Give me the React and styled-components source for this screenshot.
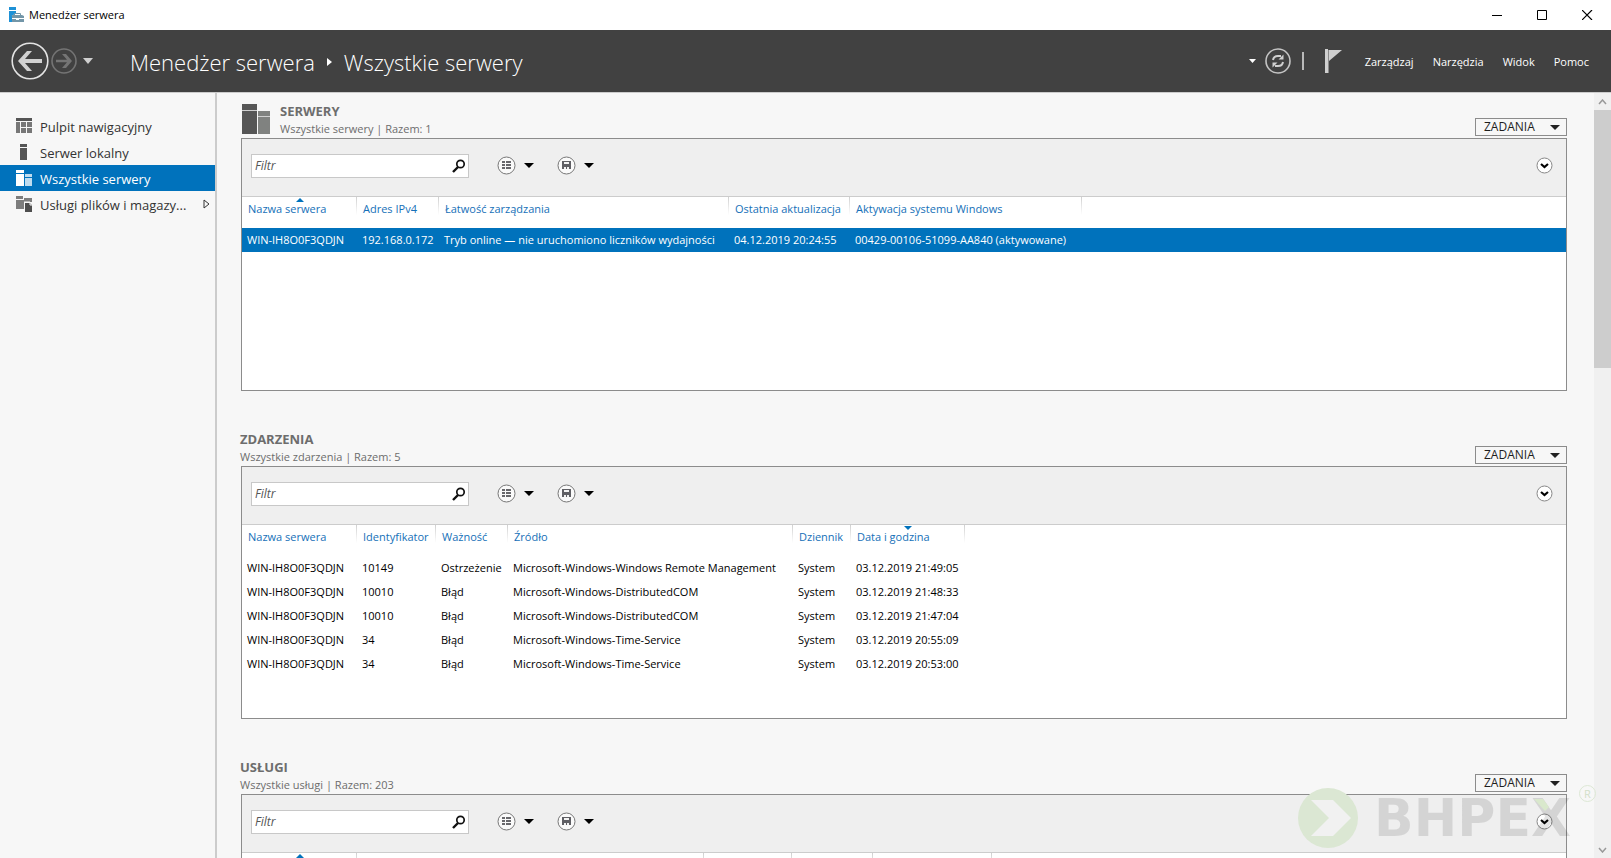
import styled, { createGlobalStyle } from 'styled-components'

const GlobalStyle = createGlobalStyle`
    * {
        box-sizing: border-box;
    }

    body {
        margin: 0;
        background-color: #f7f7f7;
        color: #1e1e1e;
        font-family: 'Open Sans', 'Noto Sans', sans-serif;
        font-size: 11px;
        line-height: 16px;
    }

    button, input {
        font: inherit;
        color: inherit;
    }

    button {
        padding: 0;
        border: 0;
        background: none;
    }

    svg {
        display: block;
        flex: none;
    }
`

const Window = styled.div`
    position: relative;
    display: flex;
    flex-direction: column;
    height: 100vh;
    overflow: hidden;
`

const TitleBar = styled.div`
    display: flex;
    align-items: center;
    flex: none;
    gap: 5px;
    height: 30px;
    padding: 0 1px 0 8px;
    background-color: #fff;
    color: #000;
`

const WindowButtons = styled.div`
    display: flex;
    margin-left: auto;
`

const WindowButton = styled.button`
    display: flex;
    justify-content: center;
    align-items: center;
    width: 45px;
    height: 28px;
`

const Header = styled.header`
    display: flex;
    align-items: center;
    flex: none;
    height: 63px;
    padding: 0 22px 0 11px;
    background-color: #414141;
    border-bottom: 1px solid #cccccc;
    color: #fff;
`

const HeaderButton = styled.button`
    display: flex;
    align-items: center;
    margin-right: ${({ $gap }) => $gap || 0}px;
`

const Breadcrumb = styled.nav`
    display: flex;
    align-items: center;
    gap: 12px;
    padding-top: 2px;
    font-size: 22px;
    font-weight: 300;
    line-height: 30px;
    white-space: nowrap;
`

const HeaderTools = styled.div`
    display: flex;
    align-items: center;
    margin-left: auto;
`

const Separator = styled.span`
    width: 2px;
    height: 18px;
    margin-right: 21px;
    background-color: #b9b9b9;
`

const Menu = styled.div`
    display: flex;
    gap: 19px;
    padding-top: 2px;
`

const Body = styled.div`
    display: flex;
    flex: 1;
    min-height: 0;
`

const Sidebar = styled.nav`
    flex: none;
    width: 217px;
    padding-top: 20px;
    border-right: 2px solid #cccccc;
`

const NavItem = styled.a`
    display: flex;
    align-items: center;
    gap: 8px;
    height: 26px;
    padding: 0 5px 0 16px;
    background-color: ${({ $active }) => $active ? '#0072bc' : 'transparent'};
    color: ${({ $active }) => $active ? '#fff' : '#333'};
    font-size: 13px;
    text-decoration: none;
    white-space: nowrap;
`

const NavLabel = styled.span`
    flex: 1;
    padding-top: 2px;
`

const Content = styled.main`
    flex: 1;
    min-width: 0;
    padding: 8px 27px 0 24px;
    overflow: hidden;
`

const Section = styled.section`
    margin-bottom: 38px;
`

const SectionHeader = styled.div`
    display: flex;
    align-items: flex-end;
    gap: 11px;
    height: 38px;
    margin-bottom: -1px;
`

const SectionIcon = styled.div`
    padding: 0 0 5px 1px;
`

const SectionTitles = styled.div`
    flex: 1;
    padding-bottom: 1px;
    margin-left: -1px;
    color: #6d6d6d;
`

const SectionTitle = styled.h2`
    margin: 0;
    font-size: 13px;
    font-weight: 700;
    line-height: 18px;
`

const SectionSubtitle = styled.p`
    margin: 0;
    font-size: 11px;
    line-height: 18px;
`

const TasksButton = styled.button`
    display: flex;
    align-items: center;
    justify-content: space-between;
    width: 92px;
    height: 18px;
    margin-bottom: 3px;
    padding: 0 6px 0 8px;
    border: 1px solid #8c8c8c;
    font-size: 12px;
`

const Panel = styled.div`
    min-height: 253px;
    border: 1px solid #8c8c8c;
    background-color: #fff;
`

const Toolbar = styled.div`
    display: flex;
    align-items: center;
    height: 58px;
    padding: 0 13px 4px 9px;
    background-color: #efefef;
    border-bottom: 1px solid #cccccc;
`

const FilterBox = styled.label`
    display: flex;
    align-items: center;
    width: 218px;
    height: 24px;
    margin-right: 28px;
    padding: 0 2px 0 3px;
    background-color: #fff;
    border: 1px solid #c8c8c8;
`

const FilterInput = styled.input`
    flex: 1;
    min-width: 0;
    padding: 0;
    border: 0;
    outline: 0;
    font-size: 12px;

    &::placeholder {
        color: #555;
        font-style: italic;
        opacity: 1;
    }
`

const ToolButton = styled.button`
    display: flex;
    align-items: center;
    gap: 8px;
    margin-right: 23px;
`

const ExpandButton = styled.button`
    margin-left: auto;
`

const Table = styled.table`
    width: 100%;
    border-collapse: collapse;
    table-layout: fixed;
    white-space: nowrap;
`

const HeadCell = styled.th`
    position: relative;
    height: 31px;
    padding: 4px 0 0 6px;
    background: linear-gradient(#d0d0d0, #fff) right top / 1px 18px no-repeat;
    color: #1570b8;
    font-weight: 400;
    text-align: left;
    vertical-align: top;
`

const SortMark = styled.svg`
    position: absolute;
    top: 1px;
    left: calc(50% - 4px);
`

const Row = styled.tr`
    background-color: ${({ $selected }) => $selected ? '#0072bc' : '#fff'};
    color: ${({ $selected }) => $selected ? '#fff' : '#000'};
`

const Cell = styled.td`
    height: 24px;
    padding: 0 0 0 5px;
`

const ScrollBar = styled.div`
    display: flex;
    flex-direction: column;
    flex: none;
    width: 17px;
    background-color: #f0f0f0;
`

const ScrollButton = styled.button`
    display: flex;
    justify-content: center;
    align-items: center;
    height: 17px;
`

const ScrollThumb = styled.div`
    height: 258px;
    margin-bottom: auto;
    background-color: #cdcdcd;
`

const Watermark = styled.div`
    position: absolute;
    right: 15px;
    bottom: 10px;
    display: flex;
    align-items: center;
    gap: 8px;
    pointer-events: none;
`

const WatermarkBadge = styled.svg`
    margin-right: 8px;
`

const WatermarkText = styled.span`
    position: relative;
    color: rgba(0, 0, 0, 0.11);
    font-family: 'DejaVu Sans', sans-serif;
    font-size: 52px;
    font-weight: 700;
    line-height: 60px;
`

const WatermarkLeaf = styled.svg`
    position: absolute;
    top: 11px;
    right: 21px;
`

const Registered = styled.span`
    align-self: flex-start;
    width: 17px;
    height: 17px;
    margin: -3px 0 0 0;
    border: 1px solid #dde8d5;
    border-radius: 50%;
    color: #d3e0c9;
    font-size: 11px;
    line-height: 15px;
    text-align: center;
`

const Caret = ({ width = 10, height = 5, color = '#000' }) => (
    <svg width={ width } height={ height } viewBox="0 0 10 5" preserveAspectRatio="none">
        <path d="M0 0h10L5 5z" fill={ color } />
    </svg>
)

const AppIcon = () => (
    <svg width="16" height="16" viewBox="0 0 16 16">
        <path d="M1 0h7v3H1zM1 4h7v2L4 9v6H1z" fill="#1e91d6" />
        <path d="M3 9l2-1h9l2 1v6H4V9z" fill="#7396a8" />
        <path d="M6.500 8V6.500h6V8" fill="none" stroke="#7396a8" />
        <path d="M4 11.500h4m3 0h5" stroke="#fff" />
        <path d="M8 11h3v2H8z" fill="#fff" />
    </svg>
)

const BackIcon = () => (
    <svg width="38" height="38" viewBox="0 0 38 38">
        <circle cx="19" cy="19" r="17.800" fill="none" stroke="#e3e3e3" strokeWidth="1.600" />
        <path d="M31 17v4H14l7 8h-5L7 19l9-10h5l-7 8z" fill="#d2d2d2" />
    </svg>
)

const ForwardIcon = () => (
    <svg width="26" height="26" viewBox="0 0 26 26">
        <circle cx="13" cy="13" r="12" fill="none" stroke="#747474" strokeWidth="1.600" />
        <path d="M5 11.700v2.600h11l-5 5.700h4l6-7-6-7h-4l5 5.700z" fill="#747474" />
    </svg>
)

const RefreshIcon = () => (
    <svg width="26" height="26" viewBox="0 0 26 26">
        <circle cx="13" cy="13" r="12" fill="none" stroke="#c4c4c4" strokeWidth="1.600" />
        <path d="M8 12c.5-3 2.500-4 5-4h3M18 14c-.5 3-2.500 4-5 4h-3" fill="none" stroke="#cfcfcf" strokeWidth="2" />
        <path d="M18.500 6.500v5h-5zM7.500 19.500v-5h5z" fill="#cfcfcf" />
    </svg>
)

const FlagIcon = () => (
    <svg width="17" height="24" viewBox="0 0 17 24">
        <path d="M0 0h3v24H0zM4 1h13L4 12z" fill="#cfcfcf" />
        <path d="M3 1h1v23H3z" fill="#8a8a8a" />
    </svg>
)

const DashboardIcon = () => (
    <svg width="16" height="16" viewBox="0 0 16 16">
        <path d="M0 0h16v3H0z" fill="#555" />
        <path d="M0 4h4v11H0zM5 4h5v5H5zM11 4h5v5h-5zM5 10h5v5H5zM11 10h5v5h-5z" fill="#777" />
    </svg>
)

const LocalIcon = () => (
    <svg width="16" height="16" viewBox="0 0 16 16">
        <path d="M4 0h7v3H4zM4 4h7v12H4z" fill="#555" />
    </svg>
)

const AllIcon = () => (
    <svg width="16" height="16" viewBox="0 0 16 16">
        <path d="M0 0h8v3H0zM0 4h8v12H0z" fill="#fff" />
        <path d="M9 4h7v3H9zM9 8h7v8H9z" fill="#bfdcef" />
    </svg>
)

const FilesIcon = () => (
    <svg width="16" height="16" viewBox="0 0 16 16">
        <path d="M0 0h7v3H0zM0 4h8v9H0zM8 2h8v4H8z" fill="#7d7d7d" />
        <path d="M9 7h5l2 2v7H9z" fill="#4e4e4e" />
        <path d="M8 6h6v3h2" fill="none" stroke="#f7f7f7" />
    </svg>
)

const ServersIcon = () => (
    <svg width="28" height="30" viewBox="0 0 28 30">
        <path d="M0 0h15v30H0z" fill="#565656" />
        <path d="M16 7h12v23H16z" fill="#808280" />
        <path d="M0 6.500h15M16 12.500h12" stroke="#d0d0d0" />
    </svg>
)

const SearchIcon = () => (
    <svg width="14" height="14" viewBox="0 0 14 14">
        <circle cx="8.500" cy="5" r="3.700" fill="none" stroke="#111" strokeWidth="1.700" />
        <path d="M6 8l-5 5" stroke="#111" strokeWidth="2.400" />
    </svg>
)

const ListIcon = () => (
    <svg width="19" height="19" viewBox="0 0 19 19">
        <circle cx="9.500" cy="9.500" r="8.500" fill="#fafafa" stroke="#777" />
        <path d="M5 5h3v2H5zM9 5h5v2H9zM5 8h3v2H5zM9 8h5v2H9zM5 11h3v2H5zM9 11h5v2H9z" fill="#68686c" />
    </svg>
)

const SaveIcon = () => (
    <svg width="19" height="19" viewBox="0 0 19 19">
        <circle cx="9.500" cy="9.500" r="8.500" fill="#fafafa" stroke="#777" />
        <path d="M5 5h9v8H5z" fill="#5f5f64" />
        <path d="M7 6h5v2H7zM7 11h2v2H7zM10 11h2v2h-2z" fill="#f2f2f2" />
    </svg>
)

const ExpandIcon = () => (
    <svg width="17" height="17" viewBox="0 0 17 17">
        <circle cx="8.500" cy="8.500" r="7.500" fill="#fff" stroke="#888" />
        <path d="M5 7l3.500 3L12 7" fill="none" stroke="#000" strokeWidth="2.200" />
    </svg>
)

const navItems = [
    { label: 'Pulpit nawigacyjny', icon: <DashboardIcon /> },
    { label: 'Serwer lokalny', icon: <LocalIcon /> },
    { label: 'Wszystkie serwery', icon: <AllIcon />, active: true },
    { label: 'Usługi plików i magazy...', icon: <FilesIcon />, more: true },
]

const serverColumns = [
    { label: 'Nazwa serwera', width: 115, sort: 'up' },
    { label: 'Adres IPv4', width: 82 },
    { label: 'Łatwość zarządzania', width: 290 },
    { label: 'Ostatnia aktualizacja', width: 121 },
    { label: 'Aktywacja systemu Windows', width: 232 },
]

const serverRows = [
    ['WIN-IH8O0F3QDJN', '192.168.0.172', 'Tryb online — nie uruchomiono liczników wydajności', '04.12.2019 20:24:55', '00429-00106-51099-AA840 (aktywowane)'],
]

const eventColumns = [
    { label: 'Nazwa serwera', width: 115 },
    { label: 'Identyfikator', width: 79 },
    { label: 'Ważność', width: 72 },
    { label: 'Źródło', width: 285 },
    { label: 'Dziennik', width: 58 },
    { label: 'Data i godzina', width: 114, sort: 'down' },
]

const eventRows = [
    ['WIN-IH8O0F3QDJN', '10149', 'Ostrzeżenie', 'Microsoft-Windows-Windows Remote Management', 'System', '03.12.2019 21:49:05'],
    ['WIN-IH8O0F3QDJN', '10010', 'Błąd', 'Microsoft-Windows-DistributedCOM', 'System', '03.12.2019 21:48:33'],
    ['WIN-IH8O0F3QDJN', '10010', 'Błąd', 'Microsoft-Windows-DistributedCOM', 'System', '03.12.2019 21:47:04'],
    ['WIN-IH8O0F3QDJN', '34', 'Błąd', 'Microsoft-Windows-Time-Service', 'System', '03.12.2019 20:55:09'],
    ['WIN-IH8O0F3QDJN', '34', 'Błąd', 'Microsoft-Windows-Time-Service', 'System', '03.12.2019 20:53:00'],
]

const serviceColumns = [
    { label: '', width: 115, sort: 'up' },
    { label: '', width: 347 },
    { label: '', width: 88 },
    { label: '', width: 81 },
    { label: '', width: 119 },
]

function Tile({ title, subtitle, icon, columns, rows, selected }) {
    return (
        <Section>
            <SectionHeader>
                { icon && <SectionIcon>{ icon }</SectionIcon> }
                <SectionTitles>
                    <SectionTitle>{ title }</SectionTitle>
                    <SectionSubtitle>{ subtitle }</SectionSubtitle>
                </SectionTitles>
                <TasksButton aria-haspopup="menu">ZADANIA <Caret color="#222" /></TasksButton>
            </SectionHeader>
            <Panel>
                <Toolbar>
                    <FilterBox>
                        <FilterInput type="text" placeholder="Filtr" aria-label="Filtr" />
                        <SearchIcon />
                    </FilterBox>
                    <ToolButton aria-label="Kryteria"><ListIcon /><Caret /></ToolButton>
                    <ToolButton aria-label="Zapisz"><SaveIcon /><Caret /></ToolButton>
                    <ExpandButton aria-label="Rozwiń"><ExpandIcon /></ExpandButton>
                </Toolbar>
                <Table>
                    <colgroup>
                        { columns.map((column, i) => <col key={ i } width={ column.width } />) }
                        <col />
                    </colgroup>
                    <thead>
                        <tr>
                            { columns.map((column, i) => (
                                <HeadCell key={ i } scope="col">
                                    { column.sort && (
                                        <SortMark width="8" height="4" viewBox="0 0 8 4">
                                            <path d={ column.sort === 'up' ? 'M0 4h8L4 0z' : 'M0 0h8L4 4z' } fill="#0072bc" />
                                        </SortMark>
                                    ) }
                                    { column.label }
                                </HeadCell>
                            )) }
                            <td />
                        </tr>
                    </thead>
                    <tbody>
                        { rows.map((row, i) => (
                            <Row key={ i } $selected={ selected === i }>
                                { row.map((value, j) => <Cell key={ j }>{ value }</Cell>) }
                                <Cell />
                            </Row>
                        )) }
                    </tbody>
                </Table>
            </Panel>
        </Section>
    )
}

function App() {
    return (
        <Window>
            <GlobalStyle />
            <TitleBar>
                <AppIcon />
                <span>Menedżer serwera</span>
                <WindowButtons>
                    <WindowButton aria-label="Minimalizuj">
                        <svg width="11" height="11" viewBox="0 0 11 11"><path d="M0 5.500h10" stroke="#000" /></svg>
                    </WindowButton>
                    <WindowButton aria-label="Maksymalizuj">
                        <svg width="11" height="10" viewBox="0 0 11 10"><path d="M.5.5h9v9h-9z" fill="none" stroke="#000" /></svg>
                    </WindowButton>
                    <WindowButton aria-label="Zamknij">
                        <svg width="11" height="10" viewBox="0 0 11 10"><path d="M0 0l10 10M10 0L0 10" stroke="#000" strokeWidth="1.200" /></svg>
                    </WindowButton>
                </WindowButtons>
            </TitleBar>
            <Header>
                <HeaderButton aria-label="Wstecz" $gap={ 2 }><BackIcon /></HeaderButton>
                <HeaderButton aria-label="Dalej" $gap={ 6 }><ForwardIcon /></HeaderButton>
                <HeaderButton aria-label="Historia" $gap={ 37 }><Caret height={ 6 } color="#cfcfcf" /></HeaderButton>
                <Breadcrumb>
                    <span>Menedżer serwera</span>
                    <svg width="5" height="8" viewBox="0 0 5 8"><path d="M0 0l5 4-5 4z" fill="#fff" /></svg>
                    <span>Wszystkie serwery</span>
                </Breadcrumb>
                <HeaderTools>
                    <HeaderButton aria-label="Opcje" $gap={ 9 }><Caret width={ 7 } height={ 4 } color="#fff" /></HeaderButton>
                    <HeaderButton aria-label="Odśwież" $gap={ 11 }><RefreshIcon /></HeaderButton>
                    <Separator />
                    <HeaderButton aria-label="Powiadomienia" $gap={ 23 }><FlagIcon /></HeaderButton>
                    <Menu>
                        <HeaderButton>Zarządzaj</HeaderButton>
                        <HeaderButton>Narzędzia</HeaderButton>
                        <HeaderButton>Widok</HeaderButton>
                        <HeaderButton>Pomoc</HeaderButton>
                    </Menu>
                </HeaderTools>
            </Header>
            <Body>
                <Sidebar>
                    { navItems.map((item) => (
                        <NavItem key={ item.label } href="#" $active={ item.active }>
                            { item.icon }
                            <NavLabel>{ item.label }</NavLabel>
                            { item.more && (
                                <svg width="7" height="10" viewBox="0 0 7 10"><path d="M1 1l5 4-5 4z" fill="none" stroke="#333" /></svg>
                            ) }
                        </NavItem>
                    )) }
                </Sidebar>
                <Content>
                    <Tile
                        title="SERWERY"
                        subtitle="Wszystkie serwery | Razem: 1"
                        icon={ <ServersIcon /> }
                        columns={ serverColumns }
                        rows={ serverRows }
                        selected={ 0 }
                    />
                    <Tile
                        title="ZDARZENIA"
                        subtitle="Wszystkie zdarzenia | Razem: 5"
                        columns={ eventColumns }
                        rows={ eventRows }
                    />
                    <Tile
                        title="USŁUGI"
                        subtitle="Wszystkie usługi | Razem: 203"
                        columns={ serviceColumns }
                        rows={ [] }
                    />
                </Content>
                <ScrollBar>
                    <ScrollButton aria-label="W górę">
                        <svg width="9" height="6" viewBox="0 0 9 6"><path d="M1 5l3.500-4L8 5" fill="none" stroke="#999" strokeWidth="1.500" /></svg>
                    </ScrollButton>
                    <ScrollThumb />
                    <ScrollButton aria-label="W dół">
                        <svg width="9" height="6" viewBox="0 0 9 6"><path d="M1 1l3.500 4L8 1" fill="none" stroke="#999" strokeWidth="1.500" /></svg>
                    </ScrollButton>
                </ScrollBar>
            </Body>
            <Watermark>
                <WatermarkBadge width="60" height="60" viewBox="0 0 60 60">
                    <circle cx="30" cy="30" r="30" fill="#dbe7d3" />
                    <path d="M13 12h22l18 18-18 18H13l18-18z" fill="#f1f1f1" />
                </WatermarkBadge>
                <WatermarkText>
                    BHPEX
                    <WatermarkLeaf width="16" height="12" viewBox="0 0 16 12">
                        <path d="M0 0h9l6 8-4 4z" fill="#d9e8cc" />
                    </WatermarkLeaf>
                </WatermarkText>
                <Registered>R</Registered>
            </Watermark>
        </Window>
    )
}

export default App
